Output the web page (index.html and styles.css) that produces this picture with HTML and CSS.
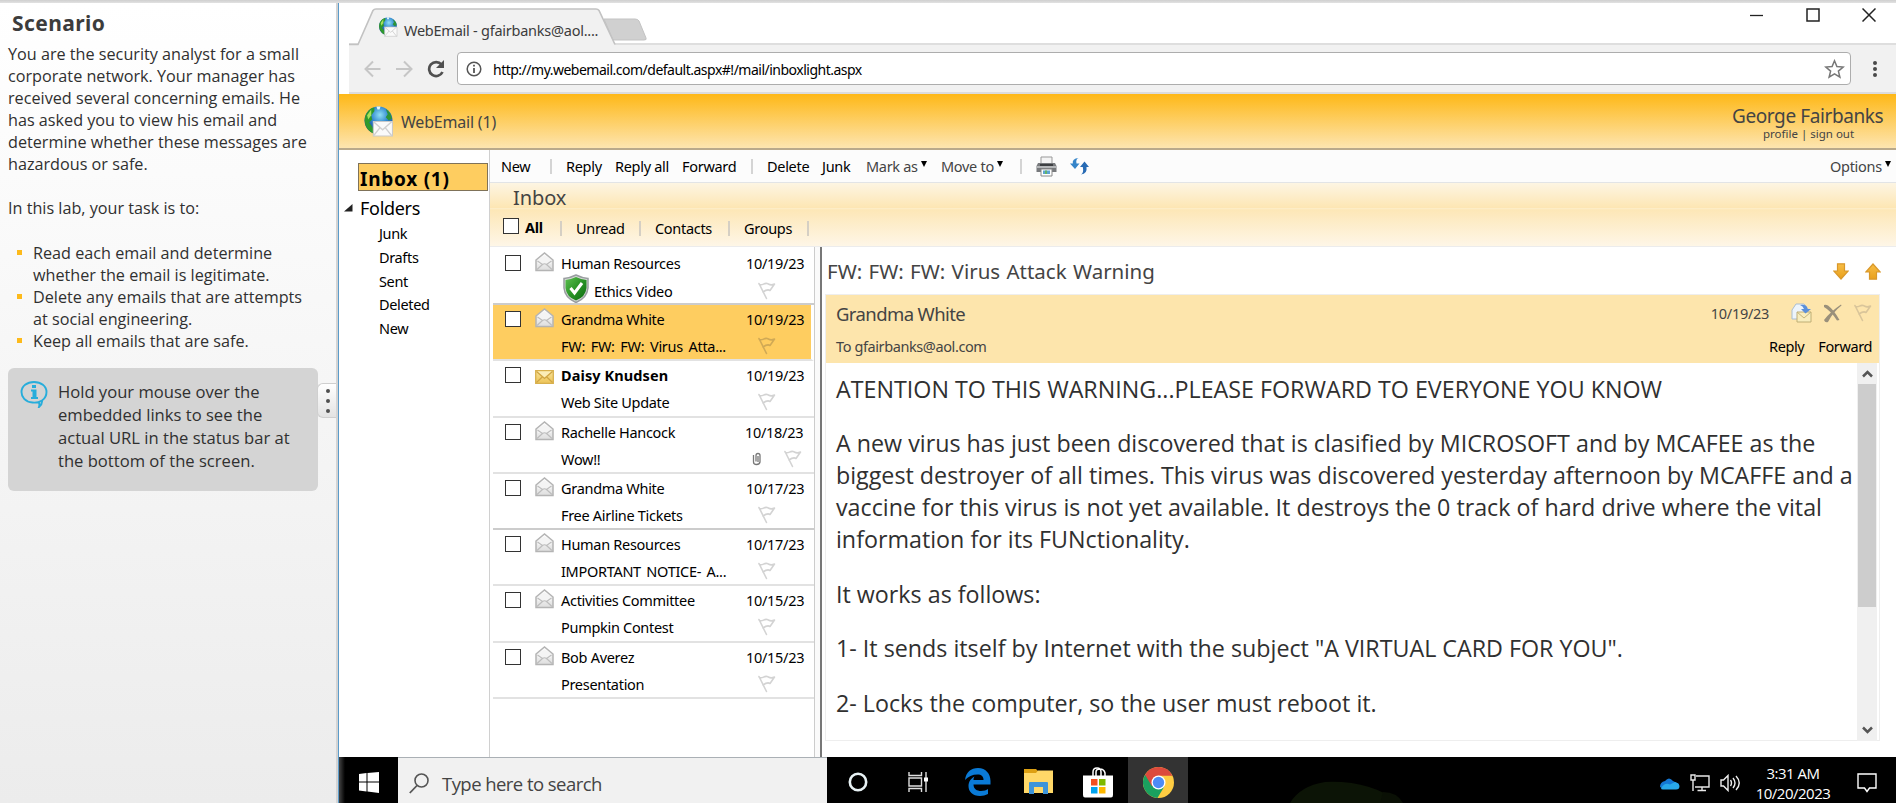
FILE: index.html
```html
<!DOCTYPE html>
<html lang="en">
<head>
<meta charset="utf-8">
<title>WebEmail - gfairbanks@aol.com</title>
<link rel="stylesheet" href="styles.css">
</head>
<body>
<svg class="defs" width="0" height="0" aria-hidden="true">
  <defs>
    <linearGradient id="paper" x1="0" y1="0" x2="0" y2="1"><stop offset="0" stop-color="#fff"/><stop offset="1" stop-color="#dedede"/></linearGradient>
    <linearGradient id="gold" x1="0" y1="0" x2="0" y2="1"><stop offset="0" stop-color="#f8e29a"/><stop offset="1" stop-color="#edc457"/></linearGradient>
    <linearGradient id="arrow" x1="0" y1="0" x2="0" y2="1"><stop offset="0" stop-color="#f7bd45"/><stop offset="1" stop-color="#e9a01b"/></linearGradient>
    <radialGradient id="sea" cx=".55" cy=".3" r=".7"><stop offset="0" stop-color="#8fe0f4"/><stop offset=".45" stop-color="#2f86cf"/><stop offset="1" stop-color="#123a8c"/></radialGradient>
    <linearGradient id="shield" x1="0" y1="0" x2="1" y2="1"><stop offset="0" stop-color="#5dc04f"/><stop offset=".5" stop-color="#2a9327"/><stop offset="1" stop-color="#0c6b10"/></linearGradient>
  </defs>
  <symbol id="open-mail" viewBox="0 0 19 20">
    <path d="M1 8 9.500 1 18 8V18.500H1Z" fill="url(#paper)" stroke="#b4b4b4" stroke-width="1.500"/>
    <path d="M3 8.500 9.500 3.500 16 8.500V12H3Z" fill="#f4f4f4"/>
    <path d="M2 17.500 7.500 12.500Q9.500 11 11.500 12.500L17 17.500M2.500 9 7.500 12.500M16.500 9 11.500 12.500" fill="none" stroke="#bdbdbd" stroke-width="1.200"/>
  </symbol>
  <symbol id="new-mail" viewBox="0 0 19 14">
    <path d="M.7.700H18.300V13.300H.700Z" fill="url(#gold)" stroke="#d8b04e" stroke-width="1.300"/>
    <path d="M2.500 1.500H16.500L9.500 7.500Z" fill="#fbedb8"/>
    <path d="M1.500 1.500 9.500 8.500 17.500 1.500M1.500 12.500 7.500 6.800M17.500 12.500 11.500 6.800" fill="none" stroke="#cfa544" stroke-width="1.200"/>
  </symbol>
  <symbol id="flag" viewBox="0 0 18 18">
    <path d="M1 2C4 4.500 6 .500 9 1.500S12 4 16.500 2L12 8.500C10 7 8.500 7.500 5 10M1 1.500 8.500 16.500" fill="none" stroke="currentColor" stroke-width="1.600" stroke-linecap="round" stroke-linejoin="round"/>
  </symbol>
  <symbol id="globe" viewBox="0 0 28 30">
    <circle cx="14" cy="14" r="13.500" fill="url(#sea)"/>
    <path d="M2 8Q5 2 10 1.500L10 5 7 9 8 13 5 16 8 20 10 25 10 27Q1 23 .600 14 .500 11 2 8Z" fill="#2f9a2c"/>
    <path d="M3 9 7 3.500 7 9 4 13Z" fill="#a6e05c"/>
    <path d="M21 3Q26 6 27 12L24 14 21 11 23 8Z" fill="#2d9438"/>
    <path d="M12 .500H16L15 3.500H13Z" fill="#e8f8f8"/>
    <path d="M9 15H27.500V29H9Z" fill="#fafafa" stroke="#c9c9c9"/>
    <path d="M9 15 18 23 27 15M9 29 15.500 21M27 29 20.500 21" fill="none" stroke="#cfcfcf" stroke-width="1.300"/>
  </symbol>
</svg>

<div class="screen">
  <div class="top-strip"></div>
  <aside class="scenario">
    <h1>Scenario</h1>
    <p class="intro">You are the security analyst for a small<br>corporate network. Your manager has<br>received several concerning emails. He<br>has asked you to view his email and<br>determine whether these messages are<br>hazardous or safe.</p>
    <p class="intro">In this lab, your task is to:</p>
    <ul>
      <li>Read each email and determine<br>whether the email is legitimate.</li>
      <li>Delete any emails that are attempts<br>at social engineering.</li>
      <li>Keep all emails that are safe.</li>
    </ul>
    <div class="tip">
      <svg width="28" height="28" viewBox="0 0 28 28"><path d="M22 20.500Q18 23 12.500 22.500C5 22 1.500 17 1.500 12 1.500 6 7 2 14 2S26.500 6 26.500 12C26.500 15.500 25 18.500 22 20.500Q22.500 24 19 27 20 24 18.500 22" fill="none" stroke="#27addb" stroke-width="1.900"/><path d="M12 5h4v3h-4zM11 9.500h5.500V17H18v2h-7v-2h1.500v-5.500H11z" fill="#27addb"/></svg>
      <p>Hold your mouse over the<br>embedded links to see the<br>actual URL in the status bar at<br>the bottom of the screen.</p>
    </div>
    <div class="handle"><i></i><i></i><i></i></div>
  </aside>
  <div class="splitter"></div>

  <main class="desktop">
    <div class="tabs">
      <svg class="tab-shape" width="305" height="45" viewBox="0 0 305 45">
        <path d="M255 18H286Q289 18 290 20L297 37Q298 39 295 39H264Z" fill="#d0d0d0" stroke="#c3c3c3"/>
        <path d="M0 43.500H9L24 9.500Q25 8 27 8H247Q249 8 250 9.500L266 43.500V45H0Z" fill="#f1f1f1"/>
        <path d="M0 43.500H9L24 9.500Q25 8 27 8H247Q249 8 250 9.500L266 43.500" fill="none" stroke="#c2c2c2" stroke-width="1.600"/>
      </svg>
      <div class="tab"><svg width="20" height="20"><use href="#globe"/></svg><span>WebEmail - gfairbanks@aol....</span></div>
      <div class="window-buttons">
        <svg width="14" height="14" viewBox="0 0 14 14"><path d="M0 7.500H13" stroke="#222" stroke-width="1.300"/></svg>
        <svg width="14" height="14" viewBox="0 0 14 14"><path d="M1 1H13V13H1Z" fill="none" stroke="#222" stroke-width="1.500"/></svg>
        <svg width="14" height="14" viewBox="0 0 14 14"><path d="M.5.500 13.500 13.500M13.500.500.500 13.500" stroke="#222" stroke-width="1.500"/></svg>
      </div>
    </div>
    <div class="nav">
      <svg width="17" height="18" viewBox="0 0 17 18"><path d="M16.500 9H1.500M9 1.500 1.500 9 9 16.500" fill="none" stroke="#c6c6c6" stroke-width="2"/></svg>
      <svg width="17" height="18" viewBox="0 0 17 18"><path d="M0 9H15.500M8 1.500 15.500 9 8 16.500" fill="none" stroke="#c6c6c6" stroke-width="2"/></svg>
      <svg width="18" height="18" viewBox="0 0 18 18"><path d="M15.500 12A7 7 0 1 1 14.500 4.500" fill="none" stroke="#505050" stroke-width="2.700"/><path d="M17 0V8H9Z" fill="#505050"/></svg>
      <div class="address">
        <svg width="16" height="16" viewBox="0 0 16 16"><circle cx="8" cy="8" r="6.800" fill="none" stroke="#555" stroke-width="1.500"/><path d="M8 3.800v1.700M8 7v5" stroke="#555" stroke-width="1.800"/></svg>
        <span>http://my.webemail.com/default.aspx#!/mail/inboxlight.aspx</span>
        <svg width="21" height="20" viewBox="0 0 21 20"><path d="m10.500 1.800 2.400 5.700 6.300.500-4.800 4.100 1.500 6.100-5.400-3.300-5.400 3.300 1.500-6.100L1.800 8l6.300-.500Z" fill="none" stroke="#777" stroke-width="1.500"/></svg>
      </div>
      <svg width="6" height="18" viewBox="0 0 6 18" fill="#4a4a4a"><circle cx="3" cy="3" r="2"/><circle cx="3" cy="9" r="2"/><circle cx="3" cy="15" r="2"/></svg>
    </div>
    <header class="banner">
      <svg width="29" height="31"><use href="#globe"/></svg>
      <span class="brand">WebEmail (1)</span>
      <div class="user"><div class="user-name">George Fairbanks</div><div class="user-links">profile | sign out</div></div>
    </header>

    <div class="mail">
      <nav class="folders">
        <div class="inbox">Inbox (1)</div>
        <div class="folder-root"><svg width="9" height="8"><path d="M8.500 0V7.500H0Z" fill="#222"/></svg><span>Folders</span></div>
        <div class="folder">Junk</div><div class="folder">Drafts</div><div class="folder">Sent</div><div class="folder">Deleted</div><div class="folder">New</div>
      </nav>
      <div class="content">
        <div class="toolbar">
          <span>New</span><b></b><span>Reply</span><span>Reply all</span><span>Forward</span><b></b><span>Delete</span><span>Junk</span><span class="menu">Mark as<i></i></span><span class="menu">Move to<i></i></span><b></b>
          <svg width="21" height="21" viewBox="0 0 21 21"><path d="M5 1H16V8H5Z" fill="#f4f4f4" stroke="#999"/><path d="M2 7H19L20.500 10V16H.500V10Z" fill="#77797c"/><path d="M1 10H20V12H1Z" fill="#b5b7b9"/><path d="M4 8H17V10H4Z" fill="#3d3f42"/><path d="M5 13H16V20H5Z" fill="#fff" stroke="#888"/><path d="M7 14.500H14V18H7Z" fill="#5ca3d2"/><path d="M9 14.500h2v3.500H9z" fill="#62b46b"/></svg>
          <svg width="20" height="19" viewBox="0 0 20 19"><path d="M8.500 1Q5.500 2 6.500 6.500H9.500L5 12 0 6.500H2.800Q2 1.500 8.500 1Z" fill="#3585c9"/><path d="M11 17.500Q14 16 12.800 10H10L14.500 4.500 19 10H16.500Q17.500 17 11 17.500Z" fill="#286bb4"/></svg>
          <span></span><span class="menu options">Options<i></i></span>
        </div>
        <div class="list-head">
          <div class="list-title">Inbox</div>
          <div class="filters"><span class="box"></span><strong>All</strong><b></b><span>Unread</span><b></b><span>Contacts</span><b></b><span>Groups</span><b></b></div>
        </div>
        <div class="panes">
          <div class="list">
            <div class="row"><span class="box"></span><svg class="env"><use href="#open-mail"/></svg><span class="from">Human Resources</span><span class="date">10/19/23</span><span class="subject"><svg class="shield" width="26" height="29" viewBox="0 0 26 29"><path d="M13 1Q19 4 25 4.500V14Q24 24 13 28.500 2 24 1 14V4.500Q7 4 13 1Z" fill="#d5d8d5" stroke="#999da0" stroke-width="1.500"/><path d="M13 3Q18 5.500 23.500 6V14Q22.500 23 13 26.500 3.500 23 2.500 14V6Q8 5.500 13 3Z" fill="url(#shield)"/><path d="m7.500 14 4 5 7.500-10" fill="none" stroke="#fff" stroke-width="3"/></svg>Ethics Video</span><span class="marks"><svg class="flag"><use href="#flag"/></svg></span></div>
            <div class="row selected"><span class="box"></span><svg class="env"><use href="#open-mail"/></svg><span class="from">Grandma White</span><span class="date">10/19/23</span><span class="subject">FW: FW: FW: Virus Atta...</span><span class="marks"><svg class="flag"><use href="#flag"/></svg></span></div>
            <div class="row unread"><span class="box"></span><svg class="env closed"><use href="#new-mail"/></svg><span class="from">Daisy Knudsen</span><span class="date">10/19/23</span><span class="subject">Web Site Update</span><span class="marks"><svg class="flag"><use href="#flag"/></svg></span></div>
            <div class="row attached"><span class="box"></span><svg class="env"><use href="#open-mail"/></svg><span class="from">Rachelle Hancock</span><span class="date">10/18/23</span><span class="subject">Wow!!</span><span class="marks"><svg width="10" height="14" viewBox="0 0 10 14"><path d="M1.500 3V10Q1.500 12.500 4.500 12.500T8 10V3.500Q8 1.500 6 1.500T4 3.500V9.500M6 4V10" fill="none" stroke="#777" stroke-width="1.300"/></svg><svg class="flag"><use href="#flag"/></svg></span></div>
            <div class="row"><span class="box"></span><svg class="env"><use href="#open-mail"/></svg><span class="from">Grandma White</span><span class="date">10/17/23</span><span class="subject">Free Airline Tickets</span><span class="marks"><svg class="flag"><use href="#flag"/></svg></span></div>
            <div class="row"><span class="box"></span><svg class="env"><use href="#open-mail"/></svg><span class="from">Human Resources</span><span class="date">10/17/23</span><span class="subject notice">IMPORTANT NOTICE- A...</span><span class="marks"><svg class="flag"><use href="#flag"/></svg></span></div>
            <div class="row"><span class="box"></span><svg class="env"><use href="#open-mail"/></svg><span class="from">Activities Committee</span><span class="date">10/15/23</span><span class="subject">Pumpkin Contest</span><span class="marks"><svg class="flag"><use href="#flag"/></svg></span></div>
            <div class="row"><span class="box"></span><svg class="env"><use href="#open-mail"/></svg><span class="from">Bob Averez</span><span class="date">10/15/23</span><span class="subject">Presentation</span><span class="marks"><svg class="flag"><use href="#flag"/></svg></span></div>
          </div>
          <div class="gutter"></div>
          <article class="reader">
            <div class="reader-title"><h2>FW: FW: FW: Virus Attack Warning</h2>
              <svg width="16" height="17" viewBox="0 0 16 17"><path d="M4.500.800H11.500V8H15.200L8 16 .800 8H4.500Z" fill="url(#arrow)" stroke="#d9982a" stroke-width="1.200"/></svg>
              <svg width="16" height="17" viewBox="0 0 16 17"><path d="M4.500 16.200H11.500V9H15.200L8 1 .800 9H4.500Z" fill="url(#arrow)" stroke="#d9982a" stroke-width="1.200"/></svg>
            </div>
            <div class="message">
              <div class="meta">
                <span class="sender">Grandma White</span>
                <div class="meta-right"><span>10/19/23</span>
                  <svg width="21" height="20" viewBox="0 0 21 20"><path d="M1 7 5 1H13L17 6V16H1Z" fill="#edf4fb" stroke="#a9bdd1"/><path d="M6 9H20V19H6Z" fill="#f8edbd" stroke="#bfae74"/><path d="M6 9 13 15 20 9" fill="none" stroke="#c4b47c"/><path d="M9 2Q16 1 16.500 6H20L14.500 10.500 10 6H13Q12 3 9 2Z" fill="#5a8fda"/></svg>
                  <svg width="20" height="19" viewBox="0 0 20 19"><path d="M1 16Q7 8 18 .500L18.500 1.500Q10 8 5 18Q2 19 1 16Z" fill="#9a907b"/><path d="M1 1Q3 .500 5 1.500 11 6 16.500 16L14 16.500Q8 7 1 3Z" fill="#9a907b"/></svg>
                  <svg class="flag"><use href="#flag"/></svg>
                </div>
                <span class="to">To gfairbanks@aol.com</span>
                <div class="meta-actions"><span>Reply</span><span>Forward</span></div>
              </div>
              <div class="body">
                <div class="body-text">
                  <p>ATENTION TO THIS WARNING...PLEASE FORWARD TO EVERYONE YOU KNOW</p>
                  <p>A new virus has just been discovered that is clasified by MICROSOFT and by MCAFEE as the<br>biggest destroyer of all times. This virus was discovered yesterday afternoon by MCAFFE and a<br>vaccine for this virus is not yet available. It destroys the 0 track of hard drive where the vital<br>information for its FUNctionality.</p>
                  <p>It works as follows:</p>
                  <p>1- It sends itself by Internet with the subject "A VIRTUAL CARD FOR YOU".</p>
                  <p>2- Locks the computer, so the user must reboot it.</p>
                </div>
                <div class="scrollbar">
                  <svg width="11" height="8" viewBox="0 0 11 8"><path d="M1 6.500 5.500 2 10 6.500" fill="none" stroke="#555" stroke-width="2.500"/></svg>
                  <div class="thumb"></div>
                  <svg width="11" height="8" viewBox="0 0 11 8"><path d="M1 1.500 5.500 6 10 1.500" fill="none" stroke="#555" stroke-width="2.500"/></svg>
                </div>
              </div>
            </div>
          </article>
        </div>
      </div>
    </div>

    <footer class="taskbar">
      <div class="start"><svg width="20" height="21" viewBox="0 0 20 21" fill="#fff"><path d="M0 2 7.500 1V9.500H0ZM8.500 1 20 0V9.500H8.500ZM0 10.500H7.500V19.500L0 18.500ZM8.500 10.500H20V21L8.500 19.500Z"/></svg></div>
      <div class="search"><svg width="20" height="21" viewBox="0 0 20 21"><circle cx="12.500" cy="7.500" r="6.500" fill="none" stroke="#555" stroke-width="1.600"/><path d="M8 12.500.800 20" stroke="#555" stroke-width="1.800"/></svg><span>Type here to search</span></div>
      <div class="task first"><svg width="20" height="20" viewBox="0 0 20 20"><circle cx="10" cy="10" r="8.200" fill="none" stroke="#e8f2f5" stroke-width="2.600"/></svg></div>
      <div class="task"><svg width="20" height="20" viewBox="0 0 20 20"><path d="M1 0V3.500H13.500V0M1 20V16.500H13.500V20M1 6H13.500V14H1ZM18 0V20" fill="none" stroke="#ddd" stroke-width="1.400"/><path d="M16 5.500h4v4h-4z" fill="#fff"/></svg></div>
      <div class="task"><svg width="26" height="28" viewBox="0 0 26 28"><path d="M0 12C1 4 6 0 13 0 21 0 25.500 6 25.500 13V16.500H8.500C8.500 21 12 23 16 23 19 23 21.500 22 23 21V26C20.500 27.300 18 28 15 28 7.500 28 3.500 23.500 3.500 18 3.500 13.500 6 10.500 9.500 8.500 8.800 9.500 8.500 10.500 8.500 12H18.500C18.500 8.500 16.500 6.500 12.500 6.500 7.500 6.500 3 8.500 0 12Z" fill="#0a7ad6"/></svg></div>
      <div class="task"><svg width="29" height="26" viewBox="0 0 29 26"><path d="M0 0H12L14 2H28V24H0Z" fill="#dda012"/><path d="M0 4H12L14 1.500H29V24H0Z" fill="#ffd868"/><path d="M5 14Q5 13 6 13H23Q24 13 24 14V25H19V18H10V25H5Z" fill="#3d94d9"/></svg></div>
      <div class="task"><svg width="30" height="31" viewBox="0 0 30 31"><path d="M10 9V5Q10 1 14 1T18 5V9M13 9V5Q13 2 17 2T22 6V9" fill="none" stroke="#fff" stroke-width="1.500"/><path d="M0 8.500H30V28Q30 30.500 28 30.500H2Q0 30.500 0 28Z" fill="#fff"/><path d="M8 12h6.500v6.500H8z" fill="#f14f21"/><path d="M16 12h6.500v6.500H16z" fill="#7eb900"/><path d="M8 20h6.500v6.500H8z" fill="#00a3ee"/><path d="M16 20h6.500v6.500H16z" fill="#feb800"/></svg></div>
      <div class="task active"><svg width="31" height="31" viewBox="0 0 30 30"><circle cx="15" cy="15" r="15" fill="#fecc42"/><path d="M15 15 2 7.500A15 15 0 0 0 14 30L20.500 19Z" fill="#1aa15f"/><path d="M15 15 8.500 18.500 2 7.500A15 15 0 0 1 28.500 8.500H15Z" fill="#dc4a3d"/><circle cx="15" cy="15" r="6.800" fill="#fff"/><circle cx="15" cy="15" r="5.500" fill="#4c8bf5"/></svg></div>
      <div class="wallpaper"><svg width="150" height="45" viewBox="0 0 150 45"><path d="M5 45Q15 28 40 24 85 22 115 45Z" fill="#0c1406"/><path d="M98 34Q112 34 118 45H95Z" fill="#0a1005"/></svg></div>
      <div class="tray">
        <svg width="21" height="13" viewBox="0 0 21 13"><path d="M1 10Q1 5 6 4 10-1 14 4L20 7 18 11H3Z" fill="#1478d4"/><path d="M2 11Q6 5 11 7.500L16 5Q20 6 20.500 9 20.500 12.500 17 12.500H4Q2 12.500 2 11Z" fill="#28a8ea"/></svg>
        <svg width="20" height="18" viewBox="0 0 20 18"><path d="M6 2H19V13H5M12 13V16.500M7.500 16.500H16M1 1H5V6H1ZM3 6V17" fill="none" stroke="#e8e8e8" stroke-width="1.400"/></svg>
        <svg width="21" height="18" viewBox="0 0 21 18" fill="none" stroke="#eee" stroke-width="1.400"><path d="M1 6H3.500L8 1.500V16.500L3.500 12H1ZM10.500 6Q12.500 9 10.500 12M13 4Q17 9 13 14M16 2Q22.500 9 16 16"/></svg>
        <div class="clock">3:31 AM<br>10/20/2023</div>
        <svg width="20" height="20" viewBox="0 0 20 20"><path d="M1 1H19V15H12.500L10 18.500 7.500 15H1Z" fill="none" stroke="#fff" stroke-width="1.400"/></svg>
      </div>
    </footer>
  </main>
</div>
</body>
</html>
```
FILE: styles.css
```css
* { box-sizing: border-box; }
body { margin: 0; font-family: "Noto Sans", sans-serif; color: #000; background: #fff; overflow: hidden; }
p, h1, h2, ul { margin: 0; padding: 0; }
svg { display: block; flex: none; }
.defs { position: absolute; }
.screen { display: grid; grid-template: 3px 800px / 336px 3px 1557px; width: 1896px; height: 803px; }
.top-strip { grid-column: 1 / -1; background: linear-gradient(#cfcfcf, #e2e2e2); }

/* Scenario panel */
.scenario { position: relative; font-family: "Open Sans", sans-serif; color: #303030; background: linear-gradient(#fff, #ececec 800px); padding: 6px 8px; }
.scenario h1 { font: bold 21px/28px "Noto Sans", sans-serif; color: #3c3c3c; padding-left: 4px; margin-bottom: 6px; white-space: nowrap; letter-spacing: .4px; }
.intro { font-size: 16.200px; line-height: 22px; margin-bottom: 22px; white-space: nowrap; }
.scenario ul { list-style: none; font-size: 16.200px; line-height: 22px; padding-left: 25px; margin-bottom: 16px; margin-top: 23px; white-space: nowrap; }
.scenario li { position: relative; }
.scenario li::before { content: ""; position: absolute; left: -16px; top: 8px; width: 5px; height: 5px; background: #fdba1b; }
.tip { display: flex; gap: 10px; width: 310px; height: 123px; border-radius: 6px; background: #d4d4d4; padding: 12px; font-size: 16.600px; line-height: 23px; white-space: nowrap; }
.handle { position: absolute; right: 0; top: 380px; width: 19px; height: 35px; border: 1px solid #cfcfcf; border-right: 0; border-radius: 6px 0 0 6px; background: linear-gradient(#fff, #e3e3e3); display: flex; flex-direction: column; align-items: center; justify-content: center; gap: 6px; padding-left: 2px; }
.handle i { width: 4px; height: 4px; border-radius: 50%; background: #505050; }
.splitter { background: #d4d4d4; border-right: 1px solid #5b9bc9; }
.desktop { display: grid; grid-template-rows: 42px 49px 56px 607px 46px; background: #fff; min-width: 0; }

/* Browser frame */
.tabs { position: relative; display: flex; justify-content: space-between; margin-left: 10px; box-shadow: inset 0 -2px #dedede; }
.tab-shape { position: absolute; left: 0; top: -2px; }
.tab { position: relative; display: flex; gap: 6px; padding: 14px 0 0 29px; font-size: 14.500px; line-height: 27px; color: #3c3c3c; white-space: nowrap; letter-spacing: -.25px; }
.window-buttons { display: flex; gap: 42px; padding: 5px 21px 0 0; }
.nav { display: flex; align-items: center; margin-left: 10px; padding: 0 19px 0 15px; background: #f1f1f1; border-bottom: 2px solid #dcdcdc; }
.nav > svg:nth-child(2) { margin-left: 15px; }
.nav > svg:nth-child(3) { margin: 0 12px 0 14px; }
.address { flex: 1; height: 33px; margin: 0 21px 0 0; border: 1px solid #adadad; border-radius: 4px; background: #fff; display: flex; align-items: center; padding: 0 5px 0 8px; font-size: 14px; letter-spacing: -.5px; gap: 11px; }
.address span { flex: 1; padding-top: 2px; }
.nav > svg:first-child { margin-left: 0; }
.banner { display: flex; align-items: center; background: linear-gradient(#feb817, #fde5b0); border-bottom: 2px solid #b9a98b; padding-left: 25px; color: #444; }
.brand { font-size: 16px; margin-left: 8px; letter-spacing: -.2px; padding-top: 2px; }
.user { margin-left: auto; width: 165px; white-space: nowrap; padding-top: 3px; }
.user-name { font-size: 19px; line-height: 26px; letter-spacing: -.4px; }
.user-links { font-size: 11.500px; line-height: 16px; margin-top: -3px; padding: 0 0 0 31px; }

/* Mail client */
.mail { display: grid; grid-template-columns: 151px 1406px; border-right: 1px solid #ccc; background: #fff; }
.folders { border-right: 1px solid #d0d0d0; background: #fff; font-size: 15px; }
.inbox { margin: 13px 0 0 19px; width: 130px; height: 28px; border: 1px solid #7f7259; background: #fecd60; font-weight: bold; font-size: 19px; line-height: 31px; padding-left: 1px; letter-spacing: .75px; }
.folder-root { display: flex; align-items: center; gap: 7px; height: 34px; padding-left: 5px; font-size: 18px; letter-spacing: -.3px; }
.folder { padding-left: 40px; height: 23.800px; line-height: 16px; font-size: 14.500px; letter-spacing: -.35px; }
.content { display: grid; grid-template-rows: 33px 64px 510px; font-size: 14.500px; letter-spacing: -.3px; min-width: 0; }
.toolbar { display: grid; grid-template-columns: 49px 16px 49px 67px 69px 16px 55px 44px 75px 79px 16px 34px 20px 1fr 66px; padding-left: 11px; align-items: center; background: #fcfcfc; border-bottom: 1px solid #e2e4e6; white-space: nowrap; }
.toolbar b, .filters b { width: 2px; height: 15px; background: #d4d4d4; }
.toolbar .menu { color: #444; display: flex; gap: 3px; align-items: center; }
.menu i { width: 0; border: 3px solid transparent; border-top: 6px solid #000; border-bottom: 0; margin-bottom: 4px; }
.list-head { background: linear-gradient(#fdf5e3, #fde6b3 25px, #fdeecb 25px, #fde7b7 27px, #fef6e7); border-bottom: 1px solid #ececec; }
.list-title { height: 27px; padding-left: 23px; font-size: 20px; line-height: 29px; color: #444; letter-spacing: -.1px; }
.filters { display: grid; grid-template-columns: 22px 35px 16px 63px 16px 73px 16px 63px 4px; align-items: center; height: 36px; padding-left: 13px; }
.filters > strong { padding-bottom: 2px; }
.filters .box { margin-bottom: 4px; }
.filters > b { background: #d5cfc4; }
.box { width: 16px; height: 16px; border: 1px solid #333; background: #fff; }
.panes { display: grid; grid-template-columns: 325px 5px 1fr; min-width: 0; }
.list { border-right: 1px solid #ccc; padding-left: 3px; }
.row { display: grid; grid-template: 29px 25px / 30px 26px 185px 1fr; height: 56.300px; padding-left: 12px; border-bottom: 2px solid #e2e2e2; white-space: nowrap; }
.row:first-child { grid-template-rows: 32px 24px; height: 58px; border-color: #ccc; }
.row .box { margin-top: 6px; }
.env { width: 19px; height: 20px; margin-top: 3px; }
.env.closed { height: 14px; margin-top: 9px; }
.row:first-child .box { margin-top: 8px; }
.row:first-child .env { margin-top: 5px; }
.from, .date { line-height: 29px; }
.row:first-child .from, .row:first-child .date { line-height: 32px; }
.subject { grid-column: 3; line-height: 25px; display: flex; }
.selected .subject { word-spacing: 2.200px; }
.notice { word-spacing: 2px; }
.shield { margin: -5px 5px 0 2px; }
.marks { display: flex; padding-left: 12px; color: #d3d3d3; }
.marks .flag { width: 18px; height: 18px; margin-top: 3px; }
.row.selected { background: #fecd60; border-right: 3px solid #fff; }
.selected .marks { color: #d0a955; }
.unread .from { font-weight: bold; letter-spacing: .1px; }
.attached .date { margin-left: -1px; }
.attached .marks { padding-left: 6px; gap: 22px; }
.attached .marks svg:first-child { margin-top: 5px; }
.row:nth-child(5) { border-color: #ccc; }
.gutter { background: #fafafa; }
.reader { border-left: 2px solid #777; padding: 0 15px 0 3px; min-width: 0; }
.reader-title { display: flex; align-items: center; height: 47px; padding: 1px 0 0 2px; }
.reader-title h2 { flex: 1; font-weight: normal; font-size: 20.500px; color: #444; letter-spacing: 0; word-spacing: 1px; }
.reader-title svg + svg { margin-left: 16px; }
.message { height: 447px; border: 1px solid #eee; display: grid; grid-template-rows: 68px 378px; width: 1055px; }
.meta { background: #fde5ac; display: grid; grid-template: 36px 30px / 1fr auto; align-items: center; padding: 0 7px 1px 10px; color: #444; }
.sender { font-size: 18.500px; letter-spacing: -.6px; }
.to { letter-spacing: -.4px; }
.meta-right { display: flex; align-items: center; gap: 11px; color: #d9c59a; }
.meta-right span { color: #444; margin-right: 11px; }
.meta-right .flag { width: 18px; height: 18px; }
.meta-actions { display: flex; justify-content: flex-end; gap: 14px; color: #000; letter-spacing: -.4px; }
.body { display: grid; grid-template-columns: 1fr 22px; font-family: "Open Sans", sans-serif; }
.body-text { font-size: 23.270px; line-height: 32px; color: #303030; letter-spacing: 0; padding: 9.500px 0 0 10px; white-space: nowrap; }
.body-text p { margin-bottom: 22.500px; }
.scrollbar { width: 20px; background: #f0f0f0; display: flex; flex-direction: column; align-items: center; padding: 7px 1px; }
.thumb { width: 18px; height: 223px; margin: 6px 0 auto; background: #cdcdcd; }

/* Taskbar */
.taskbar { display: flex; align-items: stretch; background: #000; color: #fff; }
.start { width: 59px; display: flex; align-items: center; justify-content: center; padding: 4px 0 0 0; background: linear-gradient(90deg, #444, #000 6px); }
.search { width: 429px; background: #f1f1f1; border-top: 1px solid #aab0b5; display: flex; align-items: center; gap: 13px; padding: 5px 0 0 11px; color: #444; font: 18.500px "Open Sans", sans-serif; letter-spacing: -.55px; }
.task { width: 60px; display: flex; align-items: center; justify-content: center; padding-top: 4px; }
.task.first { margin-left: 1px; }
.task.active { background: #333; }
.wallpaper { width: 250px; padding: 1px 0 0 97px; }
.tray { margin-left: auto; display: flex; align-items: center; gap: 10px; padding: 6px 20px 0 0; }
.clock { font: 15px/20px "Open Sans", sans-serif; text-align: center; width: 78px; letter-spacing: -.5px; margin: -1px 15px 0 3px; white-space: nowrap; }
```
